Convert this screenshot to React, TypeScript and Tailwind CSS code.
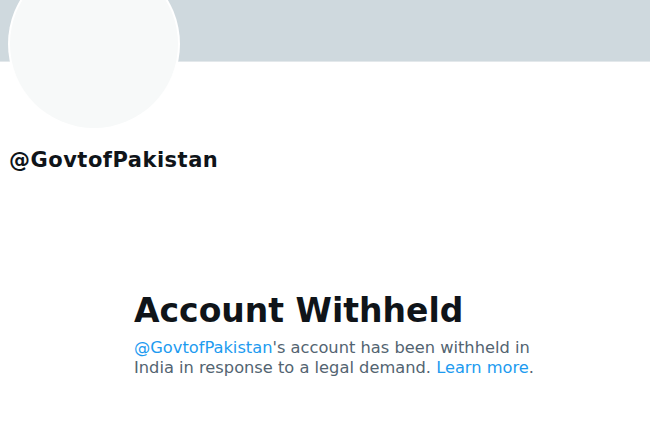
export default function App() {
  return (
    <div className="w-[650px] h-[431px] overflow-hidden bg-white font-['DejaVu_Sans',sans-serif]">
      <div className="relative h-[62px] bg-[#cfd9de] border-b border-[#e3e8eb]">
        <div className="absolute left-[10px] top-[-40px] w-[168px] h-[168px] rounded-full bg-[#f7f9f9] ring-2 ring-white" />
      </div>
      <div className="pl-[9px] pt-[85px]">
        <h2 className="text-[21px] leading-[26px] font-bold tracking-[0.5px] text-[#0f1419]">@GovtofPakistan</h2>
      </div>
      <div className="pl-[134px] pt-[119px]">
        <h1 className="text-[33px] leading-[38px] font-bold text-[#0f1419]">Account Withheld</h1>
        <p className="mt-[8px] w-[420px] text-[16.25px] leading-[20px] text-[#536471]">
          <span className="text-[#1d9bf0]">@GovtofPakistan</span>'s account has been withheld in India in response to a legal demand.{' '}
          <span className="text-[#1d9bf0]">Learn more</span>.
        </p>
      </div>
    </div>
  );
}
